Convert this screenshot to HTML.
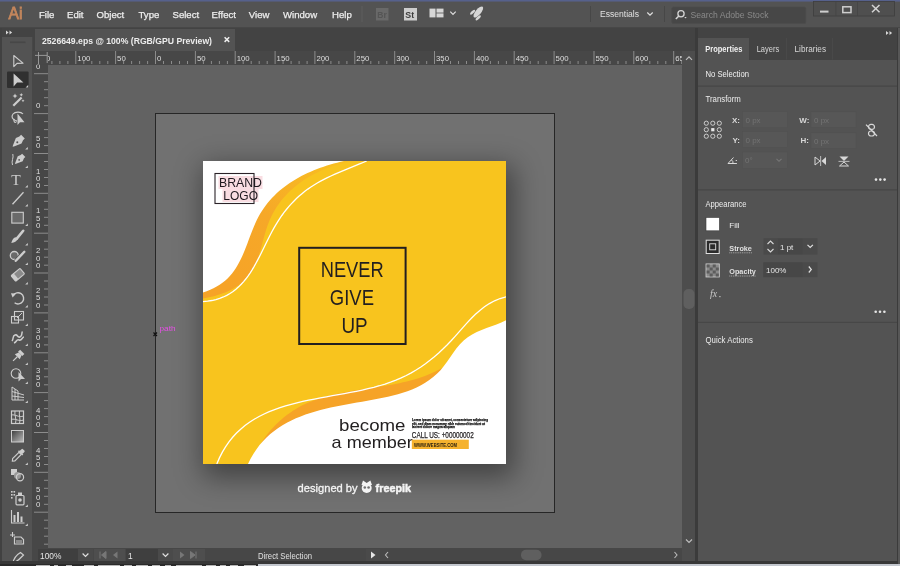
<!DOCTYPE html>
<html><head><meta charset="utf-8">
<style>
*{box-sizing:border-box;}
html,body{margin:0;padding:0;}
body{width:900px;height:566px;position:relative;overflow:hidden;background:#535353;font-family:"Liberation Sans",sans-serif;color:#d6d6d6;}
.a{position:absolute;}
svg{font-family:"Liberation Sans",sans-serif;}
.t{position:absolute;white-space:nowrap;line-height:1;}
.mi{font-size:9.6px;color:#ededed;top:10px;-webkit-text-stroke:0.25px #ededed;}
</style></head><body>

<div id="root" style="position:absolute;left:0;top:0;width:900px;height:566px;will-change:transform">
<div class="a" style="left:0;top:0;width:900px;height:1px;background:#56618c"></div>
<div class="a" style="left:0;top:1px;width:900px;height:1px;background:#555a72"></div>
<div class="a" style="left:0;top:2px;width:900px;height:26px;background:#535353"></div>
<div class="a" style="left:0;top:27px;width:900px;height:1px;background:#474747"></div>
<svg class="a" style="left:0;top:0" width="30" height="28" viewBox="0 0 30 28"><text x="8.6" y="18.9" font-size="16.6" fill="#c4865c" stroke="#c4865c" stroke-width="0.8" textLength="14" lengthAdjust="spacingAndGlyphs">Ai</text></svg>
<div class="t mi" style="left:39px">File</div>
<div class="t mi" style="left:67px">Edit</div>
<div class="t mi" style="left:96.5px">Object</div>
<div class="t mi" style="left:138.5px">Type</div>
<div class="t mi" style="left:172.5px">Select</div>
<div class="t mi" style="left:211.6px">Effect</div>
<div class="t mi" style="left:248.8px">View</div>
<div class="t mi" style="left:283px">Window</div>
<div class="t mi" style="left:332px">Help</div>
<svg class="a" style="left:350px;top:0" width="550" height="28" viewBox="350 0 550 28">
<rect x="361.5" y="6" width="1" height="16" fill="#5f5f5f"/>
<rect x="376" y="8" width="12.5" height="12.5" fill="#696969"/><text x="377.3" y="17.6" font-size="8.5" font-weight="bold" fill="#555">Br</text>
<rect x="404" y="8" width="13" height="12.5" fill="#cdcdcd"/><text x="405.3" y="17.8" font-size="8.8" font-weight="bold" fill="#3c3c3c">St</text>
<rect x="429.5" y="8.6" width="6" height="8.8" fill="#d6d6d6"/><rect x="436.5" y="8.6" width="7" height="4" fill="#d6d6d6"/><rect x="436.5" y="13.4" width="7" height="4" fill="#d6d6d6"/>
<path d="M450.3,11.6 L453,14.3 L455.7,11.6" fill="none" stroke="#e0e0e0" stroke-width="1.2"/>
<g fill="#d6d6d6"><ellipse cx="0" cy="0" rx="2.7" ry="6.8" transform="translate(478.3,12) rotate(40)"/><ellipse cx="0" cy="0" rx="1.3" ry="3.2" transform="translate(472.6,12.2) rotate(45)"/><ellipse cx="0" cy="0" rx="1.3" ry="3.4" transform="translate(478.2,17.8) rotate(45)"/></g>
<rect x="590" y="6" width="1" height="16" fill="#474747"/><rect x="664" y="6" width="1" height="16" fill="#474747"/>
<text x="600" y="17.4" font-size="9.6" fill="#e0e0e0" textLength="39" lengthAdjust="spacingAndGlyphs">Essentials</text>
<path d="M647.3,12.5 L650,15.2 L652.7,12.5" fill="none" stroke="#e0e0e0" stroke-width="1.2"/>
<rect x="671.8" y="7" width="134" height="16.5" rx="1.5" fill="#474747" stroke="#4d4d4d" stroke-width="0.8"/>
<circle cx="681" cy="13.8" r="3.1" fill="none" stroke="#d4d4d4" stroke-width="1.3"/><path d="M678.8,16 L675.8,19" stroke="#d4d4d4" stroke-width="1.6"/><path d="M684.3,16.9 L686.7,16.9 L685.5,18.4 Z" fill="#d4d4d4"/>
<text x="690.5" y="18.3" font-size="9.3" fill="#8a8a8a" textLength="78" lengthAdjust="spacingAndGlyphs">Search Adobe Stock</text>
<rect x="813.5" y="1.5" width="81" height="14.5" fill="#4f4f4f" stroke="#3f3f3f" stroke-width="0.8"/>
<rect x="835.5" y="2" width="0.8" height="14" fill="#444"/><rect x="857.2" y="2" width="0.8" height="14" fill="#444"/>
<rect x="820" y="10.6" width="8.5" height="2" fill="#cfcfcf"/>
<rect x="842.8" y="6.8" width="8.2" height="5.8" fill="none" stroke="#cfcfcf" stroke-width="1.5"/>
<path d="M872,5 L879.5,12.3 M879.5,5 L872,12.3" stroke="#d4d4d4" stroke-width="1.5"/>
</svg>
<div class="a" style="left:0;top:28px;width:2px;height:534px;background:#414141"></div>
<div class="a" style="left:2px;top:28px;width:31px;height:534px;background:#535353"></div>
<div class="a" style="left:32px;top:37px;width:1px;height:525px;background:#474747"></div>
<div class="a" style="left:2px;top:28px;width:31px;height:9px;background:#434343"></div>
<svg class="a" style="left:0;top:0" width="34" height="566" viewBox="0 0 34 566">
<path d="M6,30.5 L8.6,32.5 L6,34.5 Z M9.5,30.5 L12.1,32.5 L9.5,34.5 Z" fill="#d8d8d8"/>
<rect x="10" y="41.5" width="15.5" height="1.6" fill="#474747"/>
<path d="M13.8,55.5 L13.8,66.6 L17,63.4 L23,63.2 Z" fill="none" stroke="#cdcdcd" stroke-width="1.1" stroke-linejoin="round"/>
<rect x="7" y="71.5" width="21.6" height="16.4" rx="1" fill="#303030"/>
<path d="M13.6,73.5 L13.6,86.5 L17.1,82.6 L23.4,82.6 Z" fill="#cdcdcd"/>
<path d="M28.2,87.6 L25.599999999999998,87.6 L28.2,85.0 Z" fill="#cdcdcd"/>
<path d="M13.3,105.8 L21.6,97.5" stroke="#cdcdcd" stroke-width="2.2"/>
<path d="M15,93.5 l0.8,1.7 1.7,0.8 -1.7,0.8 -0.8,1.7 -0.8,-1.7 -1.7,-0.8 1.7,-0.8 Z M21.3,93 l0.6,1.2 1.2,0.6 -1.2,0.6 -0.6,1.2 -0.6,-1.2 -1.2,-0.6 1.2,-0.6 Z M23,99.2 l0.5,1 1,0.5 -1,0.5 -0.5,1 -0.5,-1 -1,-0.5 1,-0.5 Z" fill="#cdcdcd"/>
<path d="M17,121 C12,120 11,116.5 13,114 C15,111.5 21,111.5 23,114" fill="none" stroke="#cdcdcd" stroke-width="1.2"/>
<path d="M14.5,119 C13,121 15,124 16.5,121.5" fill="none" stroke="#cdcdcd" stroke-width="1.1"/>
<path d="M17.5,113.5 L17.5,125 L20,122.3 L24.5,122.3 Z" fill="#cdcdcd"/>
<g transform="translate(18,141.5) rotate(45)"><path d="M-2.6,-7 L2.6,-7 L2.6,-4.5 L4,-1 L0.7,6.5 L0,7.5 L-0.7,6.5 L-4,-1 L-2.6,-4.5 Z" fill="#cdcdcd"/><circle cx="0" cy="1" r="1" fill="#535353"/></g>
<path d="M27.8,149.5 L25.2,149.5 L27.8,146.9 Z" fill="#cdcdcd"/>
<g transform="translate(19.5,159.5) rotate(45)"><path d="M-2.3,-6 L2.3,-6 L2.3,-4 L3.5,-1 L0.6,5.5 L0,6.3 L-0.6,5.5 L-3.5,-1 L-2.3,-4 Z" fill="#cdcdcd"/><circle cx="0" cy="0.5" r="0.9" fill="#535353"/></g>
<path d="M12.5,165 C11,161 14,158 12.8,154" fill="none" stroke="#cdcdcd" stroke-width="1"/>
<path d="M27.8,168 L25.2,168 L27.8,165.4 Z" fill="#cdcdcd"/>
<text x="11.2" y="185" font-family="Liberation Serif" font-size="15.5" fill="#cdcdcd">T</text>
<path d="M27.8,187.5 L25.2,187.5 L27.8,184.9 Z" fill="#cdcdcd"/>
<path d="M12.5,204.3 L23.5,192.3" stroke="#cdcdcd" stroke-width="1.3"/>
<path d="M27.8,206.5 L25.2,206.5 L27.8,203.9 Z" fill="#cdcdcd"/>
<rect x="11.8" y="212.3" width="11.5" height="10.8" fill="#6a6a6a" stroke="#cdcdcd" stroke-width="1.1"/>
<path d="M27.8,226 L25.2,226 L27.8,223.4 Z" fill="#cdcdcd"/>
<path d="M23.2,230.8 L16.8,238.6" stroke="#cdcdcd" stroke-width="2.6" stroke-linecap="round"/>
<path d="M15.8,237.3 C13.5,237.8 12.2,239.5 11.3,243 C14.5,242.6 16.8,241.3 17.6,239.3 Z" fill="#cdcdcd"/>
<path d="M27.8,245.5 L25.2,245.5 L27.8,242.9 Z" fill="#cdcdcd"/>
<circle cx="14.3" cy="255.5" r="4" fill="#6a6a6a" stroke="#cdcdcd" stroke-width="1.3"/>
<path d="M24.3,251.8 L15.8,260.8" stroke="#535353" stroke-width="4"/><path d="M24.3,251.8 L15.8,260.8" stroke="#cdcdcd" stroke-width="2.4" stroke-linecap="round"/>
<path d="M27.8,265 L25.2,265 L27.8,262.4 Z" fill="#cdcdcd"/>
<g transform="translate(17.8,274.8) rotate(-40)"><rect x="-5.8" y="-3.6" width="11.6" height="7.2" rx="0.8" fill="#8a8a8a" stroke="#cdcdcd" stroke-width="1.1"/><rect x="-5.8" y="-3.6" width="3.6" height="7.2" fill="#cdcdcd"/></g>
<path d="M27.8,284.5 L25.2,284.5 L27.8,281.9 Z" fill="#cdcdcd"/>
<path d="M13.2,295.5 A5.6,5.6 0 1 1 14.6,302.8" fill="none" stroke="#cdcdcd" stroke-width="1.4"/><path d="M11,293.2 L16.2,293.6 L12.6,297.6 Z" fill="#cdcdcd"/>
<path d="M27.8,307.5 L25.2,307.5 L27.8,304.9 Z" fill="#cdcdcd"/>
<rect x="11.5" y="316.5" width="7" height="6.5" fill="none" stroke="#cdcdcd" stroke-width="1.1"/><rect x="14.5" y="311.5" width="9" height="8.5" fill="none" stroke="#cdcdcd" stroke-width="1.1"/><path d="M17,318 L22,313" stroke="#cdcdcd" stroke-width="1"/>
<path d="M27.8,326 L25.2,326 L27.8,323.4 Z" fill="#cdcdcd"/>
<path d="M12,341 C14,339 12,336 15,335 C18,334 17,338 20,337 C23,336 21,333 22.5,331.5 M14,343 C17,342 16,339 19,340 C22,341 22,337 24,337" fill="none" stroke="#cdcdcd" stroke-width="1.5"/>
<path d="M27.8,346 L25.2,346 L27.8,343.4 Z" fill="#cdcdcd"/>
<g transform="translate(18,356) rotate(45)"><rect x="-3" y="-6" width="6" height="3" fill="#cdcdcd"/><path d="M-2,-3 L2,-3 L3.5,1 L-3.5,1 Z" fill="#cdcdcd"/><rect x="-0.6" y="1" width="1.2" height="6" fill="#cdcdcd"/></g>
<path d="M27.8,365 L25.2,365 L27.8,362.4 Z" fill="#cdcdcd"/>
<circle cx="16" cy="373.5" r="4.8" fill="none" stroke="#cdcdcd" stroke-width="1.1"/><path d="M18.5,372 L18.5,381.5 L21,379 L25,379 Z" fill="#cdcdcd"/>
<path d="M27.8,384 L25.2,384 L27.8,381.4 Z" fill="#cdcdcd"/>
<path d="M12,387 L12,400 L24,400 M12,387 L18,391 L18,400 M12,391.5 L24,395 M12,396 L24,397.5 M15,389 L15,400" fill="none" stroke="#cdcdcd" stroke-width="1"/>
<path d="M27.8,403 L25.2,403 L27.8,400.4 Z" fill="#cdcdcd"/>
<rect x="11.5" y="411" width="12" height="12.5" fill="none" stroke="#cdcdcd" stroke-width="1.2"/><path d="M11.5,415 C15,414 19,418 23.5,416 M11.5,419.5 C15,418 19,422 23.5,420 M15,411 C14,415 17,419 15.5,423.5 M19.5,411 C18.5,415 21,419 19.5,423.5" fill="none" stroke="#cdcdcd" stroke-width="1"/>
<defs><linearGradient id="gr" x1="0" y1="0" x2="1" y2="1"><stop offset="0" stop-color="#3c3c3c"/><stop offset="1" stop-color="#bdbdbd"/></linearGradient></defs><rect x="11.5" y="430.5" width="12" height="11.5" fill="url(#gr)" stroke="#cdcdcd" stroke-width="1"/>
<g transform="translate(18,455.5) rotate(45)"><rect x="-2" y="-8" width="4" height="4" rx="1" fill="#cdcdcd"/><rect x="-3" y="-4.5" width="6" height="1.5" fill="#cdcdcd"/><path d="M-1.6,-3 L1.6,-3 L1.6,6 L0,8 L-1.6,6 Z" fill="none" stroke="#cdcdcd" stroke-width="1.1"/></g>
<path d="M27.8,465 L25.2,465 L27.8,462.4 Z" fill="#cdcdcd"/>
<rect x="11" y="469" width="6" height="6" fill="#cdcdcd"/><circle cx="17.5" cy="475.5" r="3.5" fill="#999"/><circle cx="20" cy="477.3" r="3.6" fill="none" stroke="#cdcdcd" stroke-width="1.2"/>
<g fill="#cdcdcd"><rect x="11" y="491" width="1.6" height="1.6"/><rect x="13.5" y="491" width="1.6" height="1.6"/><rect x="11" y="494" width="1.6" height="1.6"/><rect x="13.5" y="494" width="1.6" height="1.6"/><rect x="11" y="497" width="1.6" height="1.6"/></g><rect x="16" y="495.5" width="8" height="9.3" rx="1" fill="none" stroke="#cdcdcd" stroke-width="1.2"/><rect x="18" y="492.5" width="4" height="3" fill="#cdcdcd"/><circle cx="20" cy="500" r="1.8" fill="#cdcdcd"/>
<path d="M27.8,507 L25.2,507 L27.8,504.4 Z" fill="#cdcdcd"/>
<path d="M11.5,510 L11.5,523 L24.5,523" fill="none" stroke="#cdcdcd" stroke-width="1.1"/><rect x="13.5" y="515" width="2" height="7" fill="#cdcdcd"/><rect x="17" y="512" width="2" height="10" fill="#cdcdcd"/><rect x="20.5" y="516.5" width="2" height="5.5" fill="#cdcdcd"/>
<path d="M27.8,526 L25.2,526 L27.8,523.4 Z" fill="#cdcdcd"/>
<path d="M12.5,532 L12.5,537 M10,535 L15,535" stroke="#cdcdcd" stroke-width="1.1"/><path d="M14.5,537 L21,537 L23.5,539.5 L23.5,544 L14.5,544 Z" fill="none" stroke="#cdcdcd" stroke-width="1.2"/><rect x="16" y="540" width="6" height="3" fill="#8a8a8a"/>
<path d="M12.5,564 C13.5,559 16,555 20.5,552.5 L23.5,555 C21,558 17.5,561 12.5,564 Z" fill="none" stroke="#cdcdcd" stroke-width="1.2"/>
</svg>
<div class="a" style="left:33px;top:28px;width:663px;height:23px;background:#434343"></div>
<div class="a" style="left:35px;top:29px;width:200px;height:22px;background:#535353"></div>
<svg class="a" style="left:0;top:25px" width="700" height="30" viewBox="0 25 700 30">
<text x="42" y="43.6" font-size="9.4" font-weight="bold" fill="#ececec" textLength="170" lengthAdjust="spacingAndGlyphs">2526649.eps @ 100% (RGB/GPU Preview)</text>
<path d="M224.6,37.3 L229.2,41.9 M229.2,37.3 L224.6,41.9" stroke="#eeeeee" stroke-width="1.5"/>
</svg>
<div class="a" style="left:48px;top:65px;width:634px;height:483px;background:#626262"></div>
<div class="a" style="left:682px;top:51px;width:13px;height:510px;background:#4d4d4d"></div>
<div class="a" style="left:33px;top:548px;width:649px;height:13px;background:#474747"></div>
<svg class="a" style="left:0;top:0" width="900" height="566" viewBox="0 0 900 566">
<path d="M686,59.8 L689,56.8 L692,59.8" fill="none" stroke="#bdbdbd" stroke-width="1.2"/>
<path d="M686,539.5 L689,542.5 L692,539.5" fill="none" stroke="#bdbdbd" stroke-width="1.2"/>
<rect x="683.5" y="289" width="11" height="20" rx="5" fill="#5f5f5f"/>
<rect x="38" y="549" width="40" height="12" fill="#3f3f3f"/>
<text x="40" y="559.2" font-size="8.4" fill="#e6e6e6">100%</text>
<rect x="78" y="549" width="15" height="12" fill="#4a4a4a"/>
<path d="M82.6,553.5 L85.5,556.4 L88.4,553.5" fill="none" stroke="#e0e0e0" stroke-width="1.2"/>
<rect x="94" y="549" width="31" height="12" fill="#4e4e4e"/>
<path d="M100,551.5 L100,558.5 M106,551.5 L101.5,555 L106,558.5 Z" fill="#777" stroke="#777" stroke-width="1"/><path d="M117.5,551.5 L113,555 L117.5,558.5 Z" fill="#777"/>
<rect x="126" y="549" width="32" height="12" fill="#3f3f3f"/>
<text x="128" y="559.2" font-size="8.4" fill="#e6e6e6">1</text>
<rect x="158" y="549" width="15" height="12" fill="#4a4a4a"/>
<path d="M162.6,553.5 L165.5,556.4 L168.4,553.5" fill="none" stroke="#e0e0e0" stroke-width="1.2"/>
<rect x="173" y="549" width="32" height="12" fill="#4e4e4e"/>
<path d="M180,551.5 L184.5,555 L180,558.5 Z" fill="#777"/><path d="M190.5,551.5 L195,555 L190.5,558.5 Z M196,551.5 L196,558.5" fill="#777" stroke="#777" stroke-width="1"/>
<rect x="205" y="549" width="161" height="12" fill="#474747"/>
<text x="258" y="559.4" font-size="8.5" fill="#e0e0e0" textLength="54" lengthAdjust="spacingAndGlyphs">Direct Selection</text>
<rect x="366" y="549" width="14" height="12" fill="#4a4a4a"/>
<path d="M371,551.5 L375.5,555 L371,558.5 Z" fill="#e6e6e6"/>
<path d="M388,552 L385.5,555 L388,558" fill="none" stroke="#bbb" stroke-width="1.1"/>
<rect x="521" y="549.8" width="20.5" height="10.5" rx="5" fill="#5f5f5f"/>
<path d="M674.5,552 L677,555 L674.5,558" fill="none" stroke="#bbb" stroke-width="1.1"/>
</svg>
<div class="a" style="left:0;top:561px;width:900px;height:3px;background:#383838"></div>
<div class="a" style="left:0;top:564px;width:900px;height:2px;background:#c3c7ce"></div>
<div class="a" style="left:0;top:564px;width:258px;height:2px;background:#2a2a2a"></div>
<div class="a" style="left:36px;top:565px;width:14px;height:1px;background:#b8b8b8"></div>
<div class="a" style="left:54px;top:565px;width:4px;height:1px;background:#b8b8b8"></div>
<div class="a" style="left:66px;top:565px;width:6px;height:1px;background:#b8b8b8"></div>
<div class="a" style="left:84px;top:565px;width:10px;height:1px;background:#b8b8b8"></div>
<div class="a" style="left:98px;top:565px;width:22px;height:1px;background:#b8b8b8"></div>
<div class="a" style="left:124px;top:565px;width:8px;height:1px;background:#b8b8b8"></div>
<div class="a" style="left:136px;top:565px;width:12px;height:1px;background:#b8b8b8"></div>
<div class="a" style="left:152px;top:565px;width:8px;height:1px;background:#b8b8b8"></div>
<div class="a" style="left:165px;top:565px;width:6px;height:1px;background:#b8b8b8"></div>
<div class="a" style="left:176px;top:565px;width:26px;height:1px;background:#b8b8b8"></div>
<div class="a" style="left:206px;top:565px;width:10px;height:1px;background:#b8b8b8"></div>
<div class="a" style="left:220px;top:565px;width:6px;height:1px;background:#b8b8b8"></div>
<div class="a" style="left:230px;top:565px;width:8px;height:1px;background:#b8b8b8"></div>
<div class="a" style="left:244px;top:565px;width:12px;height:1px;background:#b8b8b8"></div>
<div class="a" style="left:33px;top:51px;width:649px;height:14px;background:#474747"></div>
<svg class="a" style="left:0;top:0" width="682" height="70" viewBox="0 0 682 70">
<g stroke="#8c8c8c" stroke-width="1">
<line x1="51.9" y1="61" x2="51.9" y2="64"/>
<line x1="59.9" y1="61" x2="59.9" y2="64"/>
<line x1="67.9" y1="61" x2="67.9" y2="64"/>
<line x1="75.8" y1="51" x2="75.8" y2="64"/>
<line x1="83.8" y1="61" x2="83.8" y2="64"/>
<line x1="91.8" y1="61" x2="91.8" y2="64"/>
<line x1="99.8" y1="61" x2="99.8" y2="64"/>
<line x1="107.8" y1="61" x2="107.8" y2="64"/>
<line x1="115.6" y1="51" x2="115.6" y2="64"/>
<line x1="123.6" y1="61" x2="123.6" y2="64"/>
<line x1="131.6" y1="61" x2="131.6" y2="64"/>
<line x1="139.6" y1="61" x2="139.6" y2="64"/>
<line x1="147.6" y1="61" x2="147.6" y2="64"/>
<line x1="155.5" y1="51" x2="155.5" y2="64"/>
<line x1="163.5" y1="61" x2="163.5" y2="64"/>
<line x1="171.5" y1="61" x2="171.5" y2="64"/>
<line x1="179.5" y1="61" x2="179.5" y2="64"/>
<line x1="187.5" y1="61" x2="187.5" y2="64"/>
<line x1="195.4" y1="51" x2="195.4" y2="64"/>
<line x1="203.4" y1="61" x2="203.4" y2="64"/>
<line x1="211.4" y1="61" x2="211.4" y2="64"/>
<line x1="219.4" y1="61" x2="219.4" y2="64"/>
<line x1="227.4" y1="61" x2="227.4" y2="64"/>
<line x1="235.2" y1="51" x2="235.2" y2="64"/>
<line x1="243.2" y1="61" x2="243.2" y2="64"/>
<line x1="251.2" y1="61" x2="251.2" y2="64"/>
<line x1="259.2" y1="61" x2="259.2" y2="64"/>
<line x1="267.2" y1="61" x2="267.2" y2="64"/>
<line x1="275.1" y1="51" x2="275.1" y2="64"/>
<line x1="283.1" y1="61" x2="283.1" y2="64"/>
<line x1="291.1" y1="61" x2="291.1" y2="64"/>
<line x1="299.1" y1="61" x2="299.1" y2="64"/>
<line x1="307.1" y1="61" x2="307.1" y2="64"/>
<line x1="314.9" y1="51" x2="314.9" y2="64"/>
<line x1="322.9" y1="61" x2="322.9" y2="64"/>
<line x1="330.9" y1="61" x2="330.9" y2="64"/>
<line x1="338.9" y1="61" x2="338.9" y2="64"/>
<line x1="346.9" y1="61" x2="346.9" y2="64"/>
<line x1="354.8" y1="51" x2="354.8" y2="64"/>
<line x1="362.8" y1="61" x2="362.8" y2="64"/>
<line x1="370.8" y1="61" x2="370.8" y2="64"/>
<line x1="378.8" y1="61" x2="378.8" y2="64"/>
<line x1="386.8" y1="61" x2="386.8" y2="64"/>
<line x1="394.7" y1="51" x2="394.7" y2="64"/>
<line x1="402.7" y1="61" x2="402.7" y2="64"/>
<line x1="410.7" y1="61" x2="410.7" y2="64"/>
<line x1="418.7" y1="61" x2="418.7" y2="64"/>
<line x1="426.7" y1="61" x2="426.7" y2="64"/>
<line x1="434.5" y1="51" x2="434.5" y2="64"/>
<line x1="442.5" y1="61" x2="442.5" y2="64"/>
<line x1="450.5" y1="61" x2="450.5" y2="64"/>
<line x1="458.5" y1="61" x2="458.5" y2="64"/>
<line x1="466.5" y1="61" x2="466.5" y2="64"/>
<line x1="474.4" y1="51" x2="474.4" y2="64"/>
<line x1="482.4" y1="61" x2="482.4" y2="64"/>
<line x1="490.4" y1="61" x2="490.4" y2="64"/>
<line x1="498.4" y1="61" x2="498.4" y2="64"/>
<line x1="506.4" y1="61" x2="506.4" y2="64"/>
<line x1="514.2" y1="51" x2="514.2" y2="64"/>
<line x1="522.2" y1="61" x2="522.2" y2="64"/>
<line x1="530.2" y1="61" x2="530.2" y2="64"/>
<line x1="538.2" y1="61" x2="538.2" y2="64"/>
<line x1="546.2" y1="61" x2="546.2" y2="64"/>
<line x1="554.1" y1="51" x2="554.1" y2="64"/>
<line x1="562.1" y1="61" x2="562.1" y2="64"/>
<line x1="570.1" y1="61" x2="570.1" y2="64"/>
<line x1="578.1" y1="61" x2="578.1" y2="64"/>
<line x1="586.1" y1="61" x2="586.1" y2="64"/>
<line x1="594.0" y1="51" x2="594.0" y2="64"/>
<line x1="602.0" y1="61" x2="602.0" y2="64"/>
<line x1="610.0" y1="61" x2="610.0" y2="64"/>
<line x1="618.0" y1="61" x2="618.0" y2="64"/>
<line x1="626.0" y1="61" x2="626.0" y2="64"/>
<line x1="633.8" y1="51" x2="633.8" y2="64"/>
<line x1="641.8" y1="61" x2="641.8" y2="64"/>
<line x1="649.8" y1="61" x2="649.8" y2="64"/>
<line x1="657.8" y1="61" x2="657.8" y2="64"/>
<line x1="665.8" y1="61" x2="665.8" y2="64"/>
<line x1="673.7" y1="51" x2="673.7" y2="64"/>
<line x1="681.7" y1="61" x2="681.7" y2="64"/>
</g><g fill="#dedede" font-size="7.8" font-family="Liberation Sans">
<text x="37.4" y="60.8">150</text>
<text x="77.3" y="60.8">100</text>
<text x="117.1" y="60.8">50</text>
<text x="157.0" y="60.8">0</text>
<text x="196.9" y="60.8">50</text>
<text x="236.7" y="60.8">100</text>
<text x="276.6" y="60.8">150</text>
<text x="316.4" y="60.8">200</text>
<text x="356.3" y="60.8">250</text>
<text x="396.2" y="60.8">300</text>
<text x="436.0" y="60.8">350</text>
<text x="475.9" y="60.8">400</text>
<text x="515.7" y="60.8">450</text>
<text x="555.6" y="60.8">500</text>
<text x="595.5" y="60.8">550</text>
<text x="635.3" y="60.8">600</text>
<text x="675.2" y="60.8">650</text>
</g>
</svg>
<div class="a" style="left:33px;top:51px;width:15px;height:497px;background:#474747"></div>
<svg class="a" style="left:0;top:0" width="60" height="566" viewBox="0 0 60 566">
<g stroke="#8c8c8c" stroke-width="1">
<line x1="34" y1="73.7" x2="48" y2="73.7"/>
<line x1="44" y1="81.7" x2="48" y2="81.7"/>
<line x1="44" y1="89.7" x2="48" y2="89.7"/>
<line x1="44" y1="97.7" x2="48" y2="97.7"/>
<line x1="44" y1="105.7" x2="48" y2="105.7"/>
<line x1="34" y1="113.6" x2="48" y2="113.6"/>
<line x1="44" y1="121.6" x2="48" y2="121.6"/>
<line x1="44" y1="129.6" x2="48" y2="129.6"/>
<line x1="44" y1="137.6" x2="48" y2="137.6"/>
<line x1="44" y1="145.6" x2="48" y2="145.6"/>
<line x1="34" y1="153.5" x2="48" y2="153.5"/>
<line x1="44" y1="161.5" x2="48" y2="161.5"/>
<line x1="44" y1="169.5" x2="48" y2="169.5"/>
<line x1="44" y1="177.5" x2="48" y2="177.5"/>
<line x1="44" y1="185.5" x2="48" y2="185.5"/>
<line x1="34" y1="193.3" x2="48" y2="193.3"/>
<line x1="44" y1="201.3" x2="48" y2="201.3"/>
<line x1="44" y1="209.3" x2="48" y2="209.3"/>
<line x1="44" y1="217.3" x2="48" y2="217.3"/>
<line x1="44" y1="225.3" x2="48" y2="225.3"/>
<line x1="34" y1="233.2" x2="48" y2="233.2"/>
<line x1="44" y1="241.2" x2="48" y2="241.2"/>
<line x1="44" y1="249.2" x2="48" y2="249.2"/>
<line x1="44" y1="257.2" x2="48" y2="257.2"/>
<line x1="44" y1="265.2" x2="48" y2="265.2"/>
<line x1="34" y1="273.0" x2="48" y2="273.0"/>
<line x1="44" y1="281.0" x2="48" y2="281.0"/>
<line x1="44" y1="289.0" x2="48" y2="289.0"/>
<line x1="44" y1="297.0" x2="48" y2="297.0"/>
<line x1="44" y1="305.0" x2="48" y2="305.0"/>
<line x1="34" y1="312.9" x2="48" y2="312.9"/>
<line x1="44" y1="320.9" x2="48" y2="320.9"/>
<line x1="44" y1="328.9" x2="48" y2="328.9"/>
<line x1="44" y1="336.9" x2="48" y2="336.9"/>
<line x1="44" y1="344.9" x2="48" y2="344.9"/>
<line x1="34" y1="352.8" x2="48" y2="352.8"/>
<line x1="44" y1="360.8" x2="48" y2="360.8"/>
<line x1="44" y1="368.8" x2="48" y2="368.8"/>
<line x1="44" y1="376.8" x2="48" y2="376.8"/>
<line x1="44" y1="384.8" x2="48" y2="384.8"/>
<line x1="34" y1="392.6" x2="48" y2="392.6"/>
<line x1="44" y1="400.6" x2="48" y2="400.6"/>
<line x1="44" y1="408.6" x2="48" y2="408.6"/>
<line x1="44" y1="416.6" x2="48" y2="416.6"/>
<line x1="44" y1="424.6" x2="48" y2="424.6"/>
<line x1="34" y1="432.5" x2="48" y2="432.5"/>
<line x1="44" y1="440.5" x2="48" y2="440.5"/>
<line x1="44" y1="448.5" x2="48" y2="448.5"/>
<line x1="44" y1="456.5" x2="48" y2="456.5"/>
<line x1="44" y1="464.5" x2="48" y2="464.5"/>
<line x1="34" y1="472.3" x2="48" y2="472.3"/>
<line x1="44" y1="480.3" x2="48" y2="480.3"/>
<line x1="44" y1="488.3" x2="48" y2="488.3"/>
<line x1="44" y1="496.3" x2="48" y2="496.3"/>
<line x1="44" y1="504.3" x2="48" y2="504.3"/>
<line x1="34" y1="512.2" x2="48" y2="512.2"/>
<line x1="44" y1="520.2" x2="48" y2="520.2"/>
<line x1="44" y1="528.2" x2="48" y2="528.2"/>
<line x1="44" y1="536.2" x2="48" y2="536.2"/>
<line x1="44" y1="544.2" x2="48" y2="544.2"/>
</g><g fill="#dedede" font-size="7.8" font-family="Liberation Sans">
<text x="36" y="68.5">0</text>
<text x="36" y="108.4">0</text>
<text x="36" y="141.0">5</text>
<text x="36" y="148.3">0</text>
<text x="36" y="173.5">1</text>
<text x="36" y="180.8">0</text>
<text x="36" y="188.1">0</text>
<text x="36" y="213.4">1</text>
<text x="36" y="220.7">5</text>
<text x="36" y="228.0">0</text>
<text x="36" y="253.2">2</text>
<text x="36" y="260.5">0</text>
<text x="36" y="267.8">0</text>
<text x="36" y="293.1">2</text>
<text x="36" y="300.4">5</text>
<text x="36" y="307.7">0</text>
<text x="36" y="333.0">3</text>
<text x="36" y="340.3">0</text>
<text x="36" y="347.6">0</text>
<text x="36" y="372.8">3</text>
<text x="36" y="380.1">5</text>
<text x="36" y="387.4">0</text>
<text x="36" y="412.7">4</text>
<text x="36" y="420.0">0</text>
<text x="36" y="427.3">0</text>
<text x="36" y="452.5">4</text>
<text x="36" y="459.8">5</text>
<text x="36" y="467.1">0</text>
<text x="36" y="492.4">5</text>
<text x="36" y="499.7">0</text>
<text x="36" y="507.0">0</text>
</g>
<rect x="33" y="51" width="15" height="13.5" fill="#474747"/>
<g stroke="#a0a0a0" stroke-width="0.9"><line x1="38.5" y1="52" x2="38.5" y2="64"/><line x1="35" y1="55.4" x2="47.5" y2="55.4"/><line x1="47.2" y1="52" x2="47.2" y2="63"/></g>
</svg>
<!-- ARTWORK -->
<div class="a" id="outer" style="left:155px;top:113px;width:400px;height:400px;background:#717171;border:1.5px solid #262626"></div>
<div class="a" id="shadow" style="left:203px;top:161px;width:303px;height:303px;box-shadow:4px 9px 26px 4px rgba(0,0,0,0.42)"></div>
<svg class="a" style="left:0;top:0" width="900" height="566" viewBox="0 0 900 566">
<defs><linearGradient id="ulg" gradientUnits="userSpaceOnUse" x1="350" y1="161" x2="230" y2="290"><stop offset="0" stop-color="#f8c020"/><stop offset="0.3" stop-color="#f7b424"/><stop offset="0.55" stop-color="#f6a828"/><stop offset="1" stop-color="#f6a327"/></linearGradient><clipPath id="ab"><rect x="203" y="161" width="303" height="303"/></clipPath></defs>
<g clip-path="url(#ab)">
<rect x="203" y="161" width="303" height="303" fill="#f8c41e"/>
<path d="M203,161 L354.00,161.00 L350.14,161.72 L346.32,162.54 L342.54,163.44 L338.80,164.44 L335.12,165.53 L331.49,166.71 L327.91,167.99 L324.39,169.36 L320.94,170.83 L317.55,172.38 L314.23,174.03 L310.99,175.78 L307.81,177.61 L304.72,179.54 L301.71,181.56 L298.78,183.67 L295.94,185.88 L293.20,188.18 L290.54,190.57 L287.99,193.06 L285.53,195.63 L283.18,198.30 L280.94,201.07 L278.81,203.92 L276.79,206.87 L274.88,209.91 L273.10,213.04 L271.44,216.26 L269.91,219.58 L268.51,222.99 L267.23,226.48 L266.06,230.06 L264.98,233.68 L263.95,237.35 L262.95,241.04 L261.96,244.73 L260.95,248.41 L259.90,252.06 L258.78,255.66 L257.57,259.19 L256.24,262.64 L254.76,265.99 L253.12,269.22 L251.28,272.31 L249.23,275.25 L246.93,278.01 L244.38,280.60 L241.60,283.00 L238.61,285.23 L235.45,287.29 L232.13,289.17 L228.69,290.89 L225.14,292.44 L221.50,293.83 L217.81,295.07 L214.09,296.15 L210.37,297.08 L206.66,297.86 L203.00,298.50 Z" fill="url(#ulg)"/>
<path d="M203,161 L344.00,161.00 L340.57,161.80 L337.14,162.65 L333.73,163.55 L330.35,164.52 L326.99,165.54 L323.66,166.63 L320.36,167.78 L317.09,169.00 L313.86,170.28 L310.67,171.63 L307.53,173.04 L304.43,174.52 L301.38,176.08 L298.38,177.70 L295.44,179.39 L292.56,181.16 L289.73,183.00 L286.97,184.92 L284.28,186.91 L281.66,188.97 L279.12,191.12 L276.64,193.34 L274.25,195.64 L271.94,198.02 L269.72,200.49 L267.58,203.04 L265.54,205.67 L263.59,208.38 L261.74,211.18 L259.99,214.07 L258.34,217.05 L256.79,220.11 L255.33,223.24 L253.94,226.43 L252.61,229.67 L251.32,232.95 L250.06,236.25 L248.82,239.56 L247.58,242.88 L246.32,246.18 L245.03,249.46 L243.71,252.71 L242.32,255.91 L240.87,259.04 L239.33,262.11 L237.69,265.10 L235.94,267.99 L234.07,270.77 L232.05,273.43 L229.88,275.97 L227.56,278.38 L225.08,280.65 L222.44,282.79 L219.64,284.78 L216.67,286.62 L213.52,288.31 L210.19,289.83 L206.69,291.20 L203.00,292.40 Z" fill="#ffffff"/>
<path d="M366.70,161.00 L363.15,162.49 L359.57,163.96 L355.96,165.41 L352.35,166.86 L348.73,168.32 L345.12,169.79 L341.52,171.28 L337.94,172.81 L334.39,174.37 L330.87,175.97 L327.39,177.63 L323.97,179.35 L320.60,181.13 L317.29,182.99 L314.06,184.94 L310.91,186.97 L307.84,189.10 L304.86,191.33 L301.97,193.66 L299.16,196.08 L296.44,198.59 L293.80,201.19 L291.24,203.88 L288.77,206.66 L286.38,209.52 L284.07,212.47 L281.84,215.49 L279.70,218.60 L277.63,221.79 L275.64,225.06 L273.72,228.40 L271.87,231.79 L270.06,235.24 L268.30,238.72 L266.56,242.22 L264.84,245.73 L263.12,249.24 L261.40,252.74 L259.65,256.21 L257.88,259.65 L256.06,263.03 L254.19,266.36 L252.26,269.60 L250.25,272.77 L248.15,275.83 L245.95,278.78 L243.63,281.62 L241.20,284.31 L238.63,286.86 L235.92,289.25 L233.04,291.47 L230.00,293.50 L226.78,295.35 L223.36,296.98 L219.74,298.39 L215.91,299.57 L211.85,300.51 L207.55,301.19 L203.00,301.60" fill="none" stroke="#ffffff" stroke-width="1.3"/>
<path d="M442.00,368.00 L438.71,369.83 L435.36,371.53 L431.96,373.11 L428.49,374.58 L424.98,375.94 L421.41,377.21 L417.81,378.39 L414.16,379.48 L410.47,380.50 L406.75,381.44 L402.99,382.32 L399.21,383.15 L395.40,383.92 L391.58,384.64 L387.73,385.33 L383.87,385.98 L380.00,386.61 L376.13,387.22 L372.24,387.82 L368.36,388.41 L364.49,389.00 L360.61,389.60 L356.75,390.21 L352.90,390.84 L349.07,391.50 L345.26,392.19 L341.47,392.91 L337.71,393.69 L333.98,394.51 L330.28,395.40 L326.63,396.35 L323.01,397.37 L319.43,398.47 L315.91,399.66 L312.43,400.93 L309.01,402.30 L305.65,403.78 L302.35,405.37 L299.11,407.08 L295.94,408.90 L292.84,410.84 L289.80,412.89 L286.84,415.06 L283.95,417.34 L281.13,419.73 L278.39,422.23 L275.72,424.84 L273.12,427.55 L270.61,430.37 L268.17,433.29 L265.82,436.32 L263.54,439.44 L261.35,442.67 L259.24,445.99 L257.22,449.41 L255.29,452.93 L253.44,456.53 L251.68,460.23 L250.00,464.00 L240,464 L506,464 L506,330 Z" fill="#f6a327"/>
<path d="M506.00,320.30 L501.33,322.50 L496.48,324.47 L491.53,326.31 L486.54,328.12 L481.59,330.01 L476.76,332.09 L472.11,334.44 L467.72,337.19 L463.66,340.42 L459.95,344.18 L456.53,348.34 L453.30,352.76 L450.18,357.29 L447.06,361.79 L443.86,366.12 L440.50,370.13 L436.94,373.78 L433.20,377.10 L429.28,380.11 L425.21,382.83 L420.98,385.28 L416.60,387.48 L412.10,389.46 L407.48,391.23 L402.74,392.82 L397.91,394.25 L392.98,395.55 L387.98,396.73 L382.91,397.81 L377.78,398.82 L372.60,399.79 L367.39,400.72 L362.15,401.64 L356.89,402.55 L351.62,403.48 L346.36,404.44 L341.10,405.43 L335.87,406.48 L330.67,407.59 L325.51,408.79 L320.40,410.07 L315.35,411.46 L310.37,412.96 L305.47,414.60 L300.66,416.39 L295.94,418.33 L291.34,420.44 L286.85,422.74 L282.49,425.24 L278.26,427.95 L274.18,430.88 L270.26,434.05 L266.51,437.47 L262.93,441.16 L259.53,445.12 L256.33,449.38 L253.34,453.94 L250.56,458.81 L248.00,464.00 L506,464 Z" fill="#ffffff"/>
<path d="M506.00,296.80 L500.09,298.51 L494.57,300.79 L489.38,303.58 L484.48,306.82 L479.85,310.43 L475.43,314.35 L471.18,318.52 L467.06,322.87 L463.04,327.33 L459.07,331.83 L455.11,336.31 L451.11,340.71 L447.05,344.97 L442.91,349.07 L438.69,353.00 L434.37,356.76 L429.96,360.35 L425.45,363.76 L420.83,366.99 L416.09,370.02 L411.24,372.86 L406.26,375.50 L401.15,377.94 L395.90,380.17 L390.53,382.20 L385.04,384.06 L379.45,385.75 L373.77,387.30 L368.01,388.73 L362.17,390.05 L356.28,391.29 L350.35,392.46 L344.39,393.57 L338.40,394.65 L332.41,395.72 L326.41,396.79 L320.44,397.89 L314.49,399.02 L308.58,400.21 L302.72,401.47 L296.92,402.83 L291.19,404.30 L285.56,405.90 L280.02,407.65 L274.59,409.57 L269.28,411.67 L264.11,413.97 L259.08,416.50 L254.21,419.26 L249.51,422.28 L244.99,425.58 L240.66,429.16 L236.54,433.06 L232.64,437.29 L228.97,441.87 L225.53,446.81 L222.35,452.14 L219.43,457.87 L216.80,464.00" fill="none" stroke="#ffffff" stroke-width="1.3"/>
</g>
<rect x="218.5" y="176" width="44" height="13" fill="#f9dde2"/>
<rect x="222.5" y="189" width="36" height="13" fill="#f9dde2"/>
<rect x="215" y="173.5" width="39" height="30" fill="none" stroke="#2b2328" stroke-width="1.1"/>
<text x="219" y="186.6" font-size="13.5" fill="#1f1a1f" textLength="43" lengthAdjust="spacingAndGlyphs">BRAND</text>
<text x="223.3" y="199.7" font-size="13.5" fill="#1f1a1f" textLength="34.7" lengthAdjust="spacingAndGlyphs">LOGO</text>
<rect x="299.2" y="247.8" width="106.4" height="96.2" fill="none" stroke="#221f20" stroke-width="2"/>
<text x="320.7" y="277.3" font-size="21.3" fill="#221f20" textLength="63" lengthAdjust="spacingAndGlyphs">NEVER</text>
<text x="329.8" y="305.1" font-size="21.3" fill="#221f20" textLength="44.2" lengthAdjust="spacingAndGlyphs">GIVE</text>
<text x="341.5" y="333.3" font-size="21.3" fill="#221f20" textLength="26.2" lengthAdjust="spacingAndGlyphs">UP</text>
<text x="339" y="430.6" font-size="17" fill="#221f20" textLength="66.5" lengthAdjust="spacingAndGlyphs">become</text>
<text x="331.6" y="448" font-size="17" fill="#221f20" textLength="81.3" lengthAdjust="spacingAndGlyphs">a member</text>
<g font-weight="bold" font-size="3.7" fill="#111" stroke="#111" stroke-width="0.25">
<text x="412" y="421.4" textLength="76" lengthAdjust="spacingAndGlyphs">Lorem ipsum dolor sit amet, consectetuer adipiscing</text>
<text x="412" y="424.7" textLength="73" lengthAdjust="spacingAndGlyphs">elit, sed diam nonummy nibh euismod tincidunt ut</text>
<text x="412" y="428" textLength="43" lengthAdjust="spacingAndGlyphs">laoreet dolore magna aliquam</text>
</g>
<text x="411.8" y="438" font-size="8.6" fill="#221f20" stroke="#221f20" stroke-width="0.25" textLength="61.9" lengthAdjust="spacingAndGlyphs">CALL US: +00000002</text>
<rect x="411.8" y="439.7" width="57" height="9.3" fill="#f5b22e"/>
<text x="414" y="447" font-size="6" font-weight="bold" fill="#2a2010" textLength="43" lengthAdjust="spacingAndGlyphs">WWW.WEBSITE.COM</text>
<text x="297.6" y="492.4" font-size="11" fill="#f4f4f4" stroke="#f4f4f4" stroke-width="0.3" textLength="60" lengthAdjust="spacingAndGlyphs">designed by</text>
<text x="375.6" y="492.4" font-size="11.5" font-weight="bold" fill="#f4f4f4" stroke="#f4f4f4" stroke-width="0.5" textLength="35.4" lengthAdjust="spacingAndGlyphs">freepik</text>
<g fill="#f4f4f4"><circle cx="366.7" cy="488" r="5"/><path d="M361.5,485 L363,480.5 L366.7,483 L370.4,480.5 L372,485 Z"/></g>
<g fill="#717171"><circle cx="364.8" cy="487.5" r="1.3"/><circle cx="368.6" cy="487.5" r="1.3"/></g>
<text x="159.5" y="331" font-size="8" fill="#e650e6" textLength="16" lengthAdjust="spacingAndGlyphs">path</text>
<path d="M153.5,332.5 L157,336 M157,332.5 L153.5,336" stroke="#111" stroke-width="1.2"/>
</svg>


<div class="a" style="left:695px;top:28px;width:3px;height:533px;background:#3b3b3b"></div>
<div class="a" style="left:698px;top:28px;width:199px;height:533px;background:#535353"></div>
<div class="a" style="left:897px;top:28px;width:1.2px;height:533px;background:#3b3b3b"></div>
<div class="a" style="left:898px;top:28px;width:2px;height:536px;background:#575757"></div>
<div class="a" style="left:698px;top:28px;width:199px;height:10px;background:#434343"></div>
<div class="a" style="left:698px;top:38px;width:199px;height:21.5px;background:#434343"></div>
<div class="a" style="left:698px;top:38px;width:51.4px;height:21.5px;background:#535353"></div>
<svg class="a" style="left:690px;top:25px" width="210" height="330" viewBox="690 25 210 330">
<path d="M886,31 L888.6,33 L886,35 Z M889.5,31 L892.1,33 L889.5,35 Z" fill="#d8d8d8"/>
<rect x="786" y="38" width="0.8" height="21.5" fill="#4c4c4c"/><rect x="832" y="38" width="0.8" height="21.5" fill="#4c4c4c"/>
<text x="705.3" y="52" font-size="8.2" font-weight="bold" fill="#f0f0f0" textLength="37" lengthAdjust="spacingAndGlyphs">Properties</text>
<text x="756.7" y="52" font-size="8.2" fill="#d8d8d8" textLength="22.5" lengthAdjust="spacingAndGlyphs">Layers</text>
<text x="794.5" y="52" font-size="8.2" fill="#d8d8d8" textLength="31.5" lengthAdjust="spacingAndGlyphs">Libraries</text>
<text x="705.5" y="77.2" font-size="8.2" fill="#f2f2f2" textLength="43.5" lengthAdjust="spacingAndGlyphs">No Selection</text>
<rect x="698" y="85.5" width="199" height="1.2" fill="#474747"/>
<text x="705.5" y="102" font-size="8.2" fill="#ededed" textLength="35.3" lengthAdjust="spacingAndGlyphs">Transform</text>
<circle cx="706.3" cy="123.2" r="2.1" fill="none" stroke="#d8d8d8" stroke-width="0.9"/>
<circle cx="712.8" cy="123.2" r="2.1" fill="none" stroke="#d8d8d8" stroke-width="0.9"/>
<circle cx="719.3" cy="123.2" r="2.1" fill="none" stroke="#d8d8d8" stroke-width="0.9"/>
<circle cx="706.3" cy="129.7" r="2.1" fill="none" stroke="#d8d8d8" stroke-width="0.9"/>
<rect x="711.1999999999999" y="128.1" width="3.2" height="3.2" fill="#e8e8e8"/>
<circle cx="719.3" cy="129.7" r="2.1" fill="none" stroke="#d8d8d8" stroke-width="0.9"/>
<circle cx="706.3" cy="136.2" r="2.1" fill="none" stroke="#d8d8d8" stroke-width="0.9"/>
<circle cx="712.8" cy="136.2" r="2.1" fill="none" stroke="#d8d8d8" stroke-width="0.9"/>
<circle cx="719.3" cy="136.2" r="2.1" fill="none" stroke="#d8d8d8" stroke-width="0.9"/>
<rect x="742.5" y="111.5" width="45" height="16.3" fill="#575757" stroke="#505050" stroke-width="0.5"/>
<rect x="742.5" y="131.6" width="45" height="16" fill="#575757" stroke="#505050" stroke-width="0.5"/>
<rect x="742.5" y="152" width="45" height="16.6" fill="#575757" stroke="#505050" stroke-width="0.5"/>
<rect x="811" y="111.8" width="45" height="15.8" fill="#575757" stroke="#505050" stroke-width="0.5"/>
<rect x="811" y="132.8" width="45" height="15.8" fill="#575757" stroke="#505050" stroke-width="0.5"/>
<g font-size="8" font-weight="bold" fill="#d8d8d8"><text x="732" y="123">X:</text><text x="732.5" y="143.3">Y:</text><text x="799.3" y="123">W:</text><text x="800.5" y="143.3">H:</text><text x="735" y="163.7">:</text></g>
<path d="M728,163.5 L736,163.5 M728,163.5 L733.5,157.5 M731.5,160 A3.5,3.5 0 0 1 733,163.5" fill="none" stroke="#d8d8d8" stroke-width="1"/>
<g font-size="8" fill="#747474"><text x="745.5" y="122.8">0 px</text><text x="745.5" y="142.8">0 px</text><text x="745" y="163.3">0°</text><text x="814" y="122.8">0 px</text><text x="814" y="143.8">0 px</text></g>
<path d="M776.5,158.8 L779,161.3 L781.5,158.8" fill="none" stroke="#777" stroke-width="1.1"/>
<g transform="translate(871.5,130.2) rotate(0)"><rect x="-3" y="-5.8" width="6" height="5" rx="2.5" fill="none" stroke="#d8d8d8" stroke-width="1.2"/><rect x="-3" y="0.8" width="6" height="5" rx="2.5" fill="none" stroke="#d8d8d8" stroke-width="1.2"/><path d="M-5.5,-5.5 L5.5,5.8" stroke="#d8d8d8" stroke-width="1.2"/></g>
<path d="M815,157 L815,165 L820,161 Z" fill="none" stroke="#d8d8d8" stroke-width="1"/><path d="M826,157 L826,165 L821.5,161 Z" fill="#d8d8d8"/><rect x="820.3" y="156" width="0.8" height="10" fill="#d8d8d8"/>
<path d="M839.5,156.5 L848.5,156.5 L844,161 Z" fill="#d8d8d8"/><path d="M839.5,166 L848.5,166 L844,162 Z" fill="none" stroke="#d8d8d8" stroke-width="1"/><rect x="838.5" y="160.9" width="11" height="0.8" fill="#d8d8d8"/>
<g fill="#e6e6e6"><circle cx="876" cy="179.6" r="1.3"/><circle cx="880.3" cy="179.6" r="1.3"/><circle cx="884.6" cy="179.6" r="1.3"/></g>
<rect x="698" y="189.3" width="199" height="1.2" fill="#474747"/>
<text x="705.5" y="207.3" font-size="8.2" fill="#ededed" textLength="41" lengthAdjust="spacingAndGlyphs">Appearance</text>
<rect x="706" y="217.5" width="13.4" height="13.3" fill="#ffffff" stroke="#3c3c3c" stroke-width="0.6"/>
<text x="729.3" y="227.6" font-size="8" fill="#ededed">Fill</text>
<rect x="706.2" y="240.2" width="13" height="13.3" fill="#2b2b2b" stroke="#e0e0e0" stroke-width="1"/><rect x="709.7" y="243.8" width="6" height="6" fill="none" stroke="#e0e0e0" stroke-width="0.9"/>
<text x="729.3" y="250.6" font-size="8" font-weight="bold" fill="#e0e0e0" textLength="22.6" lengthAdjust="spacingAndGlyphs">Stroke</text>
<path d="M729.3,252.8 H752" stroke="#bdbdbd" stroke-width="0.8" stroke-dasharray="1,0.8"/>
<rect x="763.6" y="238.2" width="13.9" height="16.4" fill="#4a4a4a"/><rect x="777.5" y="238.2" width="25.4" height="16.4" fill="#474747"/><rect x="803" y="238.2" width="14.4" height="16.4" fill="#4a4a4a"/>
<path d="M767.5,244 L770.5,241 L773.5,244 M767.5,249 L770.5,252 L773.5,249" fill="none" stroke="#d8d8d8" stroke-width="1.1"/>
<text x="780" y="249.8" font-size="8" fill="#e6e6e6">1 pt</text>
<path d="M807.5,244.8 L810.2,247.5 L812.9,244.8" fill="none" stroke="#e0e0e0" stroke-width="1.2"/>
<rect x="706" y="263.9" width="13.3" height="13.1" fill="#8a8a8a" stroke="#d0d0d0" stroke-width="0.8"/>
<rect x="706.60" y="264.50" width="3.05" height="3.0" fill="#5c5c5c"/>
<rect x="712.70" y="264.50" width="3.05" height="3.0" fill="#5c5c5c"/>
<rect x="709.65" y="267.50" width="3.05" height="3.0" fill="#5c5c5c"/>
<rect x="715.75" y="267.50" width="3.05" height="3.0" fill="#5c5c5c"/>
<rect x="706.60" y="270.50" width="3.05" height="3.0" fill="#5c5c5c"/>
<rect x="712.70" y="270.50" width="3.05" height="3.0" fill="#5c5c5c"/>
<rect x="709.65" y="273.50" width="3.05" height="3.0" fill="#5c5c5c"/>
<rect x="715.75" y="273.50" width="3.05" height="3.0" fill="#5c5c5c"/>
<text x="729.3" y="273.7" font-size="8" font-weight="bold" fill="#e0e0e0" textLength="26.6" lengthAdjust="spacingAndGlyphs">Opacity</text>
<path d="M729.3,276 H756" stroke="#bdbdbd" stroke-width="0.8" stroke-dasharray="1,0.8"/>
<rect x="763.3" y="262.3" width="39.6" height="14.9" fill="#474747"/><rect x="803" y="262.3" width="14.4" height="14.9" fill="#4a4a4a"/>
<text x="766" y="273.3" font-size="8" fill="#e6e6e6">100%</text>
<path d="M808.8,266.5 L811.3,269.5 L808.8,272.5" fill="none" stroke="#e0e0e0" stroke-width="1.2"/>
<text x="710" y="297" font-size="10" font-style="italic" font-family="Liberation Serif" fill="#c8c8c8">fx</text><rect x="719.3" y="296" width="1.2" height="1.2" fill="#c8c8c8"/>
<g fill="#e6e6e6"><circle cx="875.7" cy="311.7" r="1.3"/><circle cx="880" cy="311.7" r="1.3"/><circle cx="884.4" cy="311.7" r="1.3"/></g>
<rect x="698" y="321.8" width="199" height="1.2" fill="#474747"/>
<text x="705.5" y="342.7" font-size="8.2" fill="#ededed" textLength="47.3" lengthAdjust="spacingAndGlyphs">Quick Actions</text>
</svg>
</div></body></html>
